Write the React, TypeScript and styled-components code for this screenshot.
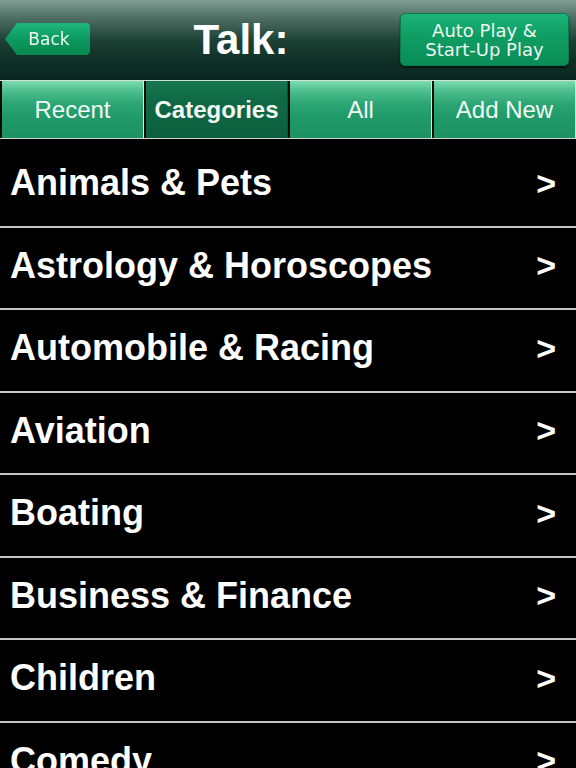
import React from 'react';
import styled, { createGlobalStyle } from 'styled-components';

const GlobalStyle = createGlobalStyle`
  html, body {
    margin: 0;
    padding: 0;
    background: #000;
    overflow: hidden;
  }
  * { box-sizing: border-box; }
`;

const categories = [
  'Animals & Pets',
  'Astrology & Horoscopes',
  'Automobile & Racing',
  'Aviation',
  'Boating',
  'Business & Finance',
  'Children',
  'Comedy',
];

const tabs = ['Recent', 'Categories', 'All', 'Add New'];

const Page = styled.div`
  width: 576px;
  height: 768px;
  overflow: hidden;
  background: #000;
  font-family: "Liberation Sans", Arial, sans-serif;
`;

const Header = styled.header`
  height: 80px;
  display: flex;
  align-items: center;
  padding: 0 7px 0 5px;
  background: linear-gradient(#819e94 0%, #4f6f64 22%, #1d4236 50%, #0f3026 75%, #0a281f 100%);
`;

const BackButton = styled.button`
  width: 85px;
  height: 32px;
  margin-top: -2px;
  border: 0;
  padding: 0 0 0 3px;
  color: #eef8f2;
  font-family: "DejaVu Sans", Verdana, sans-serif;
  font-size: 17px;
  background: linear-gradient(#1fb87c 0%, #0d9c62 45%, #07874f 100%);
  clip-path: polygon(12px 0, 100% 0, 100% 100%, 12px 100%, 0 50%);
  border-radius: 0 4px 4px 0;
  filter: drop-shadow(0 2px 1px rgba(0, 0, 0, 0.5));
`;

const Title = styled.h1`
  flex: 1;
  margin: 0;
  padding-right: 8px;
  text-align: center;
  color: #fff;
  font-size: 42px;
  font-weight: bold;
`;

const AutoButton = styled.button`
  width: 169px;
  height: 53px;
  margin-top: -1px;
  border: 1px solid #0b7a4c;
  border-radius: 5px;
  padding: 0;
  color: #eef8f2;
  font-family: "DejaVu Sans", Verdana, sans-serif;
  font-size: 18px;
  line-height: 19px;
  background: linear-gradient(#1cb47a 0%, #0f9e64 40%, #0a8d57 100%);
  box-shadow: 0 2px 2px rgba(0, 0, 0, 0.55);
`;

const TabBar = styled.nav`
  height: 59px;
  display: grid;
  grid-template-columns: repeat(4, 1fr);
  border-top: 1px solid #cfe2da;
  border-bottom: 1px solid #cfd6d3;
  background: #000;
`;

const Tab = styled.div<{ $active?: boolean }>`
  display: flex;
  align-items: center;
  justify-content: center;
  border-left: 2px solid #050a08;
  border-right: 1px solid ${p => (p.$active ? '#1b4a38' : '#d6eee4')};
  color: #f2faf6;
  font-size: 24px;
  font-weight: ${p => (p.$active ? 'bold' : 'normal')};
  background: ${p =>
    p.$active
      ? 'linear-gradient(#17754f 0%, #106a46 30%, #0c5f3e 100%)'
      : 'linear-gradient(#7cdcb0 0%, #4cbd8c 18%, #2ba673 40%, #229b6a 60%, #1c9161 100%)'};
`;

const List = styled.ul`
  list-style: none;
  margin: 0;
  padding: 6px 0 0;
`;

const Row = styled.li`
  height: 82.5px;
  display: flex;
  align-items: center;
  justify-content: space-between;
  padding: 0 20px 4px 10px;
  border-bottom: 2px solid #c6c6c6;
  color: #fff;
  font-size: 36px;
  font-weight: bold;
`;

const Chevron = styled.span`
  font-size: 34px;
  font-weight: bold;
`;

export default function App() {
  return (
    <Page>
      <GlobalStyle />
      <Header>
        <BackButton>Back</BackButton>
        <Title>Talk:</Title>
        <AutoButton>
          Auto Play &amp;
          <br />
          Start-Up Play
        </AutoButton>
      </Header>
      <TabBar>
        {tabs.map(t => (
          <Tab key={t} $active={t === 'Categories'}>
            {t}
          </Tab>
        ))}
      </TabBar>
      <List>
        {categories.map(c => (
          <Row key={c}>
            <span>{c}</span>
            <Chevron>&gt;</Chevron>
          </Row>
        ))}
      </List>
    </Page>
  );
}
